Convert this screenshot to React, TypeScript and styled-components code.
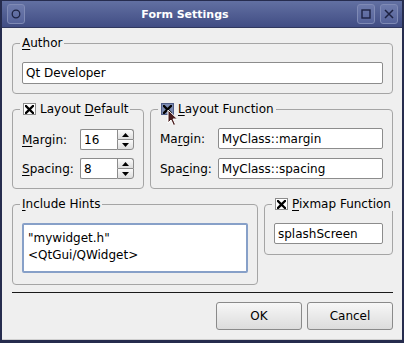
import { createGlobalStyle } from "styled-components";
import styled from "styled-components";

const GlobalStyle = createGlobalStyle`
	html, body {
		margin: 0;
		padding: 0;
		background: #ffffff;
	}
	body {
		font-family: "DejaVu Sans", "Liberation Sans", sans-serif;
		font-size: 12px;
		color: #000;
	}
`;

const Window = styled.div`
	width: 404px;
	height: 343px;
	box-sizing: border-box;
	display: flex;
	flex-direction: column;
	background: #efefef;
	border: 2px solid #262c4e;
	border-top: 1px solid #262c4e;
	border-bottom-width: 3px;
	overflow: hidden;
`;

const TitleBar = styled.div`
	height: 27px;
	flex: none;
	display: flex;
	align-items: center;
	padding: 0 4px 0 5px;
	background: linear-gradient(#6270a2, #414d84);
	border-bottom: 1px solid #30385f;
	box-sizing: border-box;
`;

const TitleText = styled.div`
	flex: 1;
	text-align: center;
	color: #fff;
	font-weight: bold;
	font-size: 11px;
	padding-right: 12px;
`;

const TitleButtons = styled.div`
	display: flex;
	gap: 5px;
`;

const TitleButton = styled.div`
	width: 18px;
	height: 20px;
	box-sizing: border-box;
	border: 1px solid #7f8ab5;
	border-radius: 3px;
	background: linear-gradient(#6d7aab, #56639a);
	display: flex;
	align-items: center;
	justify-content: center;
`;

const Body = styled.div`
	flex: 1;
	display: flex;
	flex-direction: column;
	padding: 0 9px 0 10px;
	border-bottom: 1px solid #cfcfcf;
`;

const Row = styled.div<{ $align?: string }>`
	display: flex;
	gap: 6px;
	align-items: ${(p) => p.$align ?? "stretch"};
`;

const Group = styled.section<{ $width?: number; $fill?: boolean; $pb?: number }>`
	margin-top: 15px;
	box-sizing: border-box;
	flex: ${(p) => (p.$fill ? "1 1 0" : "none")};
	${(p) => (p.$width ? `width: ${p.$width}px;` : "")}
	border: 1px solid #a5a5a5;
	border-radius: 4px;
	padding: 0 9px ${(p) => p.$pb ?? 9}px 9px;
	min-width: 0;
`;

const GroupTitle = styled.div`
	position: relative;
	display: flex;
	align-items: center;
	gap: 4px;
	width: max-content;
	height: 14px;
	line-height: 14px;
	margin: -8px 0 0 -2px;
	padding: 0 2px;
	background: #efefef;
	white-space: nowrap;
`;

const GroupContent = styled.div<{ $pt?: number }>`
	padding-top: ${(p) => p.$pt ?? 12}px;
`;

const Mn = styled.u`
	text-decoration: underline;
	text-underline-offset: 2px;
	text-decoration-thickness: 1px;
`;

const Box = styled.span<{ $hover?: boolean }>`
	width: 13px;
	height: 12px;
	box-sizing: border-box;
	border: 1px solid ${(p) => (p.$hover ? "#4f5d86" : "#8c8c8c")};
	background: ${(p) => (p.$hover ? "#7d8cb3" : "#ffffff")};
	display: flex;
	align-items: center;
	justify-content: center;
	margin-left: 1px;
`;

const Cursor = styled.svg`
	position: absolute;
	left: 9px;
	top: 7px;
	pointer-events: none;
`;

const FieldGrid = styled.div<{ $rowGap?: number }>`
	display: grid;
	grid-template-columns: auto 1fr;
	column-gap: 6px;
	row-gap: ${(p) => p.$rowGap ?? 8}px;
	align-items: center;
`;

const Label = styled.label`
	white-space: nowrap;
`;

const LineEdit = styled.div<{ $height?: number }>`
	height: ${(p) => p.$height ?? 22}px;
	box-sizing: border-box;
	background: #fff;
	border: 1px solid #8c8c8c;
	border-radius: 2px;
	padding: 0 3px;
	display: flex;
	align-items: center;
	white-space: nowrap;
	overflow: hidden;
`;

const TextEdit = styled.div`
	height: 50px;
	box-sizing: border-box;
	background: #fff;
	border: 2px solid #87a0c8;
	border-radius: 2px;
	padding: 5px 4px;
	line-height: 17px;
`;

const Spin = styled.div`
	width: 54px;
	height: 21px;
	display: flex;
	justify-self: end;
`;

const SpinField = styled.div`
	flex: 1;
	box-sizing: border-box;
	background: #fff;
	border: 1px solid #8c8c8c;
	border-right: none;
	border-radius: 2px 0 0 2px;
	padding: 0 3px;
	display: flex;
	align-items: center;
`;

const SpinArrows = styled.div`
	width: 17px;
	display: flex;
	flex-direction: column;
`;

const SpinButton = styled.div<{ $top?: boolean }>`
	flex: 1;
	box-sizing: border-box;
	border: 1px solid #8c8c8c;
	${(p) => (p.$top ? "border-bottom: none; border-radius: 0 3px 0 0;" : "border-radius: 0 0 3px 0;")}
	background: linear-gradient(#fbfbfb, #dedede);
	display: flex;
	align-items: center;
	justify-content: center;
`;

const Separator = styled.div`
	height: 1px;
	margin-top: 7px;
	background: #1a1a1a;
`;

const ButtonRow = styled.div`
	display: flex;
	justify-content: flex-end;
	gap: 5px;
	margin-top: 9px;
`;

const PushButton = styled.button`
	width: 86px;
	height: 28px;
	box-sizing: border-box;
	font: inherit;
	color: #000;
	background: linear-gradient(#f7f7f7, #dcdcdc);
	border: 1px solid #8a8a8a;
	border-radius: 3px;
	padding: 0;
`;

const XMark = () => (
	<svg width="9" height="9" viewBox="0 0 9 9">
		<path d="M1 1 L8 8 M8 1 L1 8" stroke="#000" strokeWidth="2.3" strokeLinecap="square" />
	</svg>
);

const Check = ({ hover }: { hover?: boolean }) => (
	<Box $hover={hover}>
		<XMark />
	</Box>
);

const SpinBox = ({ value }: { value: string }) => (
	<Spin>
		<SpinField>{value}</SpinField>
		<SpinArrows>
			<SpinButton $top>
				<svg width="7" height="4" viewBox="0 0 7 4">
					<path d="M0 4 L3.5 0 L7 4 Z" fill="#000" />
				</svg>
			</SpinButton>
			<SpinButton>
				<svg width="7" height="4" viewBox="0 0 7 4">
					<path d="M0 0 L7 0 L3.5 4 Z" fill="#000" />
				</svg>
			</SpinButton>
		</SpinArrows>
	</Spin>
);

export default function App() {
	return (
		<>
			<GlobalStyle />
			<Window>
				<TitleBar>
					<TitleButton>
						<svg width="10" height="10" viewBox="0 0 10 10">
							<circle cx="5" cy="5" r="3.8" fill="none" stroke="#1d2242" strokeWidth="1.3" />
						</svg>
					</TitleButton>
					<TitleText>Form Settings</TitleText>
					<TitleButtons>
						<TitleButton>
							<svg width="10" height="10" viewBox="0 0 10 10">
								<rect x="1" y="1" width="8" height="8" fill="none" stroke="#1d2242" strokeWidth="1.4" />
							</svg>
						</TitleButton>
						<TitleButton>
							<svg width="10" height="10" viewBox="0 0 10 10">
								<path d="M1 1 L9 9 M9 1 L1 9" stroke="#1d2242" strokeWidth="1.5" />
							</svg>
						</TitleButton>
					</TitleButtons>
				</TitleBar>

				<Body>
					<Group $pb={9}>
						<GroupTitle>
							<span>
								<Mn>A</Mn>uthor
							</span>
						</GroupTitle>
						<GroupContent $pt={12}>
							<LineEdit>Qt Developer</LineEdit>
						</GroupContent>
					</Group>

					<Row>
						<Group $width={132} $pb={9}>
							<GroupTitle>
								<Check />
								<span>
									Layout <Mn>D</Mn>efault
								</span>
							</GroupTitle>
							<GroupContent $pt={13}>
								<FieldGrid $rowGap={8}>
									<Label>
										<Mn>M</Mn>argin:
									</Label>
									<SpinBox value="16" />
									<Label>
										<Mn>S</Mn>pacing:
									</Label>
									<SpinBox value="8" />
								</FieldGrid>
							</GroupContent>
						</Group>
						<Group $fill $pb={9}>
							<GroupTitle>
								<Check hover />
								<span>
									<Mn>L</Mn>ayout Function
								</span>
								<Cursor width="12" height="18" viewBox="0 0 12 18">
									<path
										d="M1 1 L1 14 L4 11 L6.5 16.5 L8.5 15.5 L6 10 L10.5 10 Z"
										fill="#4a1e1e"
										stroke="#fff"
										strokeWidth="1"
										strokeLinejoin="round"
									/>
								</Cursor>
							</GroupTitle>
							<GroupContent $pt={12}>
								<FieldGrid $rowGap={9}>
									<Label>
										Ma<Mn>r</Mn>gin:
									</Label>
									<LineEdit $height={21}>MyClass::margin</LineEdit>
									<Label>
										Spa<Mn>c</Mn>ing:
									</Label>
									<LineEdit $height={21}>MyClass::spacing</LineEdit>
								</FieldGrid>
							</GroupContent>
						</Group>
					</Row>

					<Row $align="flex-start">
						<Group $fill $pb={11}>
							<GroupTitle>
								<span>
									<Mn>I</Mn>nclude Hints
								</span>
							</GroupTitle>
							<GroupContent $pt={12}>
								<TextEdit>
									"mywidget.h"
									<br />
									&lt;QtGui/QWidget&gt;
								</TextEdit>
							</GroupContent>
						</Group>
						<Group $width={129} $pb={10}>
							<GroupTitle>
								<Check />
								<span>
									<Mn>P</Mn>ixmap Function
								</span>
							</GroupTitle>
							<GroupContent $pt={12}>
								<LineEdit $height={21}>splashScreen</LineEdit>
							</GroupContent>
						</Group>
					</Row>

					<Separator />

					<ButtonRow>
						<PushButton>OK</PushButton>
						<PushButton>Cancel</PushButton>
					</ButtonRow>
				</Body>
			</Window>
		</>
	);
}
